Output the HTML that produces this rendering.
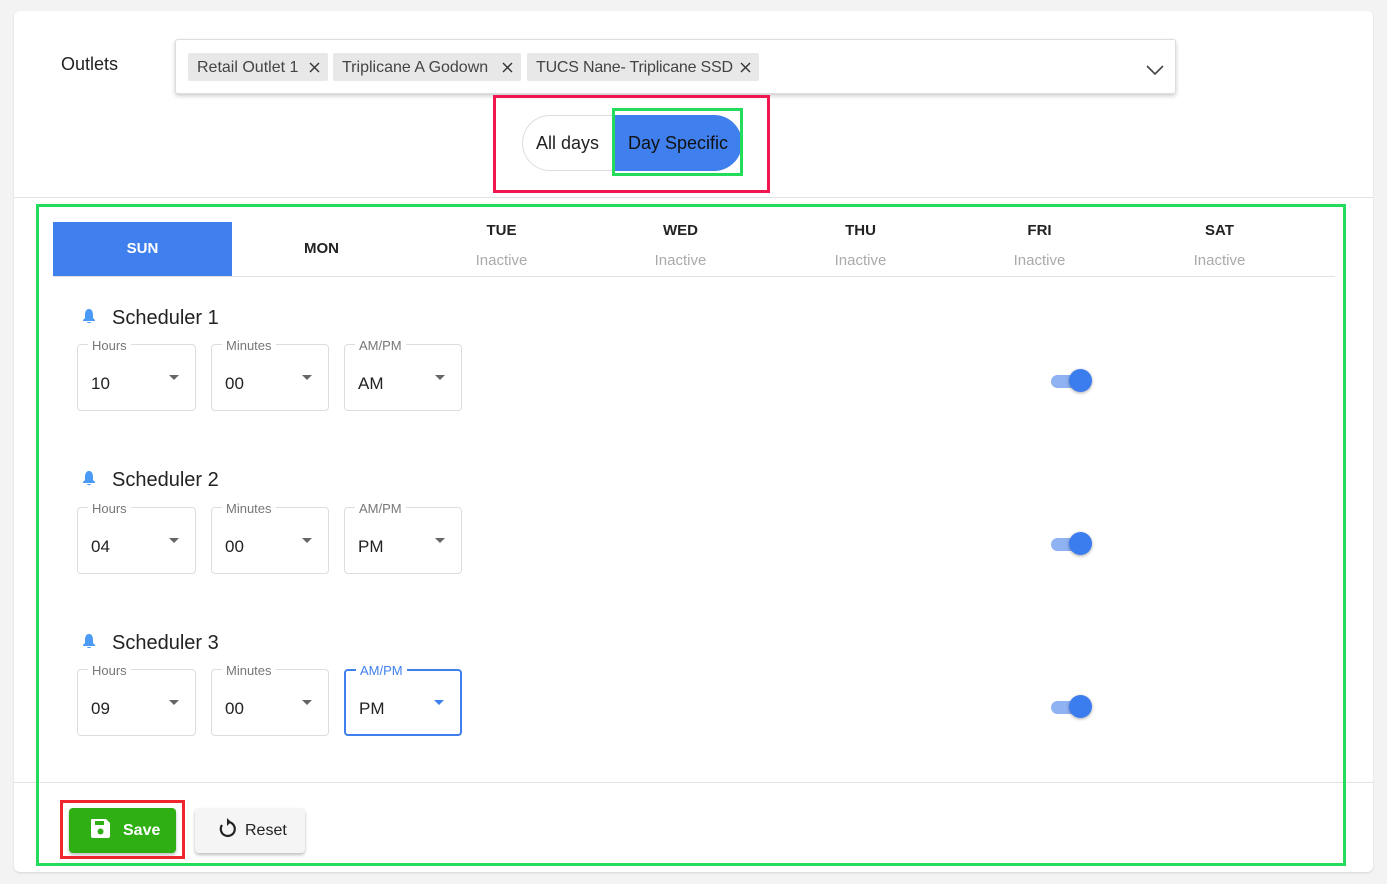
<!DOCTYPE html>
<html><head><style>
*{box-sizing:border-box;margin:0;padding:0}
body{width:1387px;height:884px;background:#f3f3f3;font-family:"Liberation Sans",sans-serif;position:relative;overflow:hidden;color:#222}
.abs{position:absolute}
.card{left:14px;top:11px;width:1359px;height:861px;background:#fff;border-radius:6px;box-shadow:0 1px 2px rgba(0,0,0,.12)}
.chip{position:absolute;top:53px;height:28px;background:#e8e8e8;border-radius:2px;font-size:16px;color:#444;line-height:29px;padding-left:9px}
.chip svg{position:absolute;right:8px;top:9px}
.tab{position:absolute;top:222px;width:179px;height:54px;text-align:center;font-size:15px;font-weight:bold;color:#222}
.tab .in{display:block;font-weight:normal;color:#aaa;font-size:15px;margin-top:13px}
.fld{position:absolute;height:67px;border:1px solid #ddd;border-radius:4px}
.fld label{position:absolute;top:-7px;left:10px;background:#fff;padding:0 4px;font-size:13px;color:#777}
.fld .v{position:absolute;left:13px;top:29px;font-size:17px;color:#222}
.fld .ar{position:absolute;right:16px;top:30px;border-left:5px solid transparent;border-right:5px solid transparent;border-top:5px solid #666}
.title{position:absolute;left:82px;font-size:20px;color:#222}
.title i{display:inline-block;width:14px;margin-right:16px}
.tg{position:absolute;left:1051px;width:40px;height:24px}
.tg .t{position:absolute;left:0;top:6px;width:36px;height:13px;border-radius:7px;background:#8fb2f3}
.tg .k{position:absolute;left:18px;top:0;width:23px;height:23px;border-radius:50%;background:#3b7cef;box-shadow:0 1px 3px rgba(0,0,0,.35)}
</style></head><body>
<div class="abs card"></div>
<div class="abs" style="left:61px;top:54px;font-size:18px;color:#222">Outlets</div>
<div class="abs" style="left:175px;top:39px;width:1001px;height:55px;border:1px solid #ddd;border-radius:3px;box-shadow:0 2px 4px rgba(0,0,0,.2);background:#fff"></div>
<div class="chip" style="left:188px;width:140px">Retail Outlet 1<svg width="11" height="11"><path d="M1 1L10 10M10 1L1 10" stroke="#333" stroke-width="1.4"/></svg></div>
<div class="chip" style="left:333px;width:188px">Triplicane A Godown<svg width="11" height="11"><path d="M1 1L10 10M10 1L1 10" stroke="#333" stroke-width="1.4"/></svg></div>
<div class="chip" style="left:527px;width:232px;letter-spacing:-0.2px">TUCS Nane- Triplicane SSD<svg width="11" height="11"><path d="M1 1L10 10M10 1L1 10" stroke="#333" stroke-width="1.4"/></svg></div>
<svg class="abs" style="left:1146px;top:64px" width="18" height="12"><path d="M1 2 L9 10 L17 2" stroke="#444" stroke-width="1.6" fill="none"/></svg>
<div class="abs" style="left:522px;top:115px;width:220px;height:56px;border:1px solid #ddd;border-radius:28px;background:#fff"></div>
<div class="abs" style="left:536px;top:133px;font-size:18px">All days</div>
<div class="abs" style="left:614px;top:115px;width:128px;height:56px;border-radius:0 28px 28px 0;background:#3f7fee;font-size:18px;line-height:57px;padding-left:14px;color:#111">Day Specific</div>
<div class="abs" style="left:493px;top:95px;width:277px;height:98px;border:3px solid #f0174f"></div>
<div class="abs" style="left:612px;top:108px;width:131px;height:68px;border:3px solid #23dc5c"></div>
<div class="abs" style="left:14px;top:197px;width:1359px;height:1px;background:#e2e2e2"></div>
<div class="abs" style="left:14px;top:782px;width:1359px;height:1px;background:#e2e2e2"></div>
<div class="abs" style="left:53px;top:276px;width:1282px;height:1px;background:#e2e2e2"></div>
<div class="tab" style="left:53px;background:#3f7fee;color:#fff;line-height:54px">SUN</div>
<div class="tab" style="left:232px;line-height:54px">MON</div>
<div class="tab" style="left:412px">TUE<span class="in">Inactive</span></div>
<div class="tab" style="left:591px">WED<span class="in">Inactive</span></div>
<div class="tab" style="left:771px">THU<span class="in">Inactive</span></div>
<div class="tab" style="left:950px">FRI<span class="in">Inactive</span></div>
<div class="tab" style="left:1130px">SAT<span class="in">Inactive</span></div>

<div class="title" style="top:307px"><i><svg width="14" height="16" viewBox="0 0 14 16"><path d="M7 1C4 1 3 4 3 7V10L1 12V13H13V12L11 10V7C11 4 10 1 7 1Z M5 14H9C9 15.5 5 15.5 5 14Z" fill="#4a9af6"/></svg></i>Scheduler 1</div>
<div class="fld" style="left:77px;top:344px;width:119px"><label>Hours</label><div class="v">10</div><div class="ar"></div></div>
<div class="fld" style="left:211px;top:344px;width:118px"><label>Minutes</label><div class="v">00</div><div class="ar"></div></div>
<div class="fld" style="left:344px;top:344px;width:118px"><label>AM/PM</label><div class="v">AM</div><div class="ar"></div></div>
<div class="tg" style="top:369px"><div class="t"></div><div class="k"></div></div>

<div class="title" style="top:469px"><i><svg width="14" height="16" viewBox="0 0 14 16"><path d="M7 1C4 1 3 4 3 7V10L1 12V13H13V12L11 10V7C11 4 10 1 7 1Z M5 14H9C9 15.5 5 15.5 5 14Z" fill="#4a9af6"/></svg></i>Scheduler 2</div>
<div class="fld" style="left:77px;top:507px;width:119px"><label>Hours</label><div class="v">04</div><div class="ar"></div></div>
<div class="fld" style="left:211px;top:507px;width:118px"><label>Minutes</label><div class="v">00</div><div class="ar"></div></div>
<div class="fld" style="left:344px;top:507px;width:118px"><label>AM/PM</label><div class="v">PM</div><div class="ar"></div></div>
<div class="tg" style="top:532px"><div class="t"></div><div class="k"></div></div>

<div class="title" style="top:632px"><i><svg width="14" height="16" viewBox="0 0 14 16"><path d="M7 1C4 1 3 4 3 7V10L1 12V13H13V12L11 10V7C11 4 10 1 7 1Z M5 14H9C9 15.5 5 15.5 5 14Z" fill="#4a9af6"/></svg></i>Scheduler 3</div>
<div class="fld" style="left:77px;top:669px;width:119px"><label>Hours</label><div class="v">09</div><div class="ar"></div></div>
<div class="fld" style="left:211px;top:669px;width:118px"><label>Minutes</label><div class="v">00</div><div class="ar"></div></div>
<div class="fld" style="left:344px;top:669px;width:118px;border:2px solid #3f7fee"><label style="color:#3f7fee;top:-8px">AM/PM</label><div class="v" style="top:28px">PM</div><div class="ar" style="border-top-color:#3f7fee;top:29px"></div></div>
<div class="tg" style="top:695px"><div class="t"></div><div class="k"></div></div>

<div class="abs" style="left:36px;top:204px;width:1310px;height:662px;border:3px solid #23dc5c"></div>

<div class="abs" style="left:69px;top:808px;width:107px;height:45px;background:#2faf13;border-radius:4px;box-shadow:0 2px 3px rgba(0,0,0,.25);color:#fff;font-weight:bold;font-size:16px;line-height:45px;padding-left:54px">Save</div>
<svg class="abs" style="left:90px;top:818px" width="21" height="21" viewBox="0 0 21 21"><path d="M2 1H16L20 5V18Q20 20 18 20H3Q1 20 1 18V3Q1 1 2 1Z" fill="#fff"/><rect x="5" y="3" width="9" height="4" fill="#2faf13"/><circle cx="10.5" cy="13.5" r="3" fill="#2faf13"/></svg>
<div class="abs" style="left:60px;top:800px;width:125px;height:59px;border:3px solid #f0262e"></div>
<div class="abs" style="left:195px;top:808px;width:110px;height:45px;background:#f5f5f5;border-radius:4px;box-shadow:0 2px 3px rgba(0,0,0,.25);font-size:16px;line-height:45px;padding-left:50px;color:#222">Reset</div>
<svg class="abs" style="left:216px;top:818px" width="22" height="22" viewBox="0 0 22 22"><path d="M6 7A7 7 0 1 0 11 4" stroke="#222" stroke-width="2.2" fill="none"/><path d="M11 0L15 4L11 8Z" fill="#222"/></svg>
</body></html>
